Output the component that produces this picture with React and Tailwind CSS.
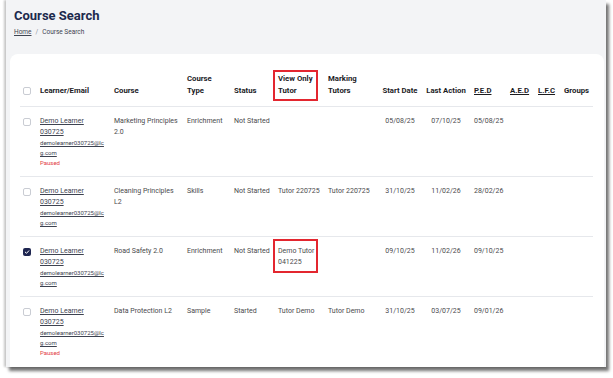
import React from "react";

const rows = [
  {
    checked: false,
    course: ["Marketing Principles", "2.0"],
    type: "Enrichment",
    status: "Not Started",
    vot: [],
    mark: [],
    start: "05/08/25",
    last: "07/10/25",
    ped: "05/08/25",
    paused: true,
  },
  {
    checked: false,
    course: ["Cleaning Principles", "L2"],
    type: "Skills",
    status: "Not Started",
    vot: ["Tutor 220725"],
    mark: ["Tutor 220725"],
    start: "31/10/25",
    last: "11/02/26",
    ped: "28/02/26",
    paused: false,
  },
  {
    checked: true,
    course: ["Road Safety 2.0"],
    type: "Enrichment",
    status: "Not Started",
    vot: ["Demo Tutor", "041225"],
    boxed: true,
    mark: [],
    start: "09/10/25",
    last: "11/02/26",
    ped: "09/10/25",
    paused: false,
  },
  {
    checked: false,
    course: ["Data Protection L2"],
    type: "Sample",
    status: "Started",
    vot: ["Tutor Demo"],
    mark: ["Tutor Demo"],
    start: "31/10/25",
    last: "03/07/25",
    ped: "09/01/26",
    paused: true,
  },
];

function Checkbox({ checked }) {
  if (checked) {
    return (
      <div className="w-[8px] h-[8px] rounded-[2px] bg-[#1e2550] flex items-center justify-center">
        <svg width="6" height="6" viewBox="0 0 12 12" fill="none">
          <path d="M2.5 6.2 L5 8.6 L9.6 3.6" stroke="white" strokeWidth="2" strokeLinecap="round" strokeLinejoin="round" />
        </svg>
      </div>
    );
  }
  return <div className="w-[8px] h-[8px] rounded-[2px] border border-[#c9ccd3] bg-white" />;
}

function Lines({ lines }) {
  return lines.map((l, i) => (
    <div key={i} className="whitespace-nowrap">
      {l}
    </div>
  ));
}

export default function App() {
  const th = "align-bottom text-left font-bold text-[7.75px] leading-[12px] pt-0 px-0 pb-[9px] text-[#1c1c1f]";
  const td = "align-top px-0 pt-[9px] pb-[8px] text-[7px] leading-[11px] text-[#4a4a4d]";
  return (
    <div className="w-[613px] h-[378px] bg-white pl-[6px] font-['Roboto',sans-serif]">
      <div className="w-[600px] h-[367px] bg-[#f3f4f6] overflow-hidden shadow-[-2px_0_2px_rgba(0,0,0,0.22),3px_4px_3px_rgba(0,0,0,0.55)]">
        <div className="pl-[8px] pt-[7px]">
          <h1 className="text-[13px] leading-[18px] font-bold text-[#1d2a4d]">Course Search</h1>
          <div className="mt-[2px] flex gap-[4px] text-[6.5px] leading-[10px] text-[#3f4552]">
            <span className="underline">Home</span>
            <span className="text-[#8a8f99]">/</span>
            <span>Course Search</span>
          </div>
        </div>
        <div className="ml-[4px] mt-[17px] w-[594px] h-[400px] bg-white rounded-t-lg pt-[19px] pl-[10px]">
          <table className="table-fixed border-collapse w-[573px]">
            <colgroup>
              <col className="w-[20px]" />
              <col className="w-[74px]" />
              <col className="w-[73px]" />
              <col className="w-[47px]" />
              <col className="w-[44px]" />
              <col className="w-[50px]" />
              <col className="w-[50px]" />
              <col className="w-[44px]" />
              <col className="w-[48px]" />
              <col className="w-[40px]" />
              <col className="w-[28px]" />
              <col className="w-[26px]" />
              <col className="w-[29px]" />
            </colgroup>
            <thead>
              <tr className="border-b border-[#e6e8ec]">
                <th className={th}>
                  <div className="h-[12px] flex items-center pl-[3px]">
                    <Checkbox />
                  </div>
                </th>
                <th className={th}>Learner/Email</th>
                <th className={th}>Course</th>
                <th className={th}>
                  Course
                  <br />
                  Type
                </th>
                <th className={th}>Status</th>
                <th className={th}>
                  <div className="relative">
                    <span className="absolute left-[-5px] top-[-3px] w-[45px] h-[31px] border-2 border-solid border-[#e3262f]" />
                    View Only
                    <br />
                    Tutor
                  </div>
                </th>
                <th className={th}>
                  Marking
                  <br />
                  Tutors
                </th>
                <th className={th + " !text-center"}>Start Date</th>
                <th className={th + " !text-center"}>Last Action</th>
                <th className={th + " !pl-[4px]"}>
                  <span className="underline">P.E.D</span>
                </th>
                <th className={th}>
                  <span className="underline">A.E.D</span>
                </th>
                <th className={th}>
                  <span className="underline">L.F.C</span>
                </th>
                <th className={th}>Groups</th>
              </tr>
            </thead>
            <tbody>
              {rows.map((r, i) => (
                <tr key={i} className={i < rows.length - 1 ? "border-b border-[#e6e8ec]" : ""}>
                  <td className={td}>
                    <div className="pl-[3px] pt-[1.5px]">
                      <Checkbox checked={r.checked} />
                    </div>
                  </td>
                  <td className={td}>
                    <div className="underline text-[#3d4250]">
                      <div>Demo Learner</div>
                      <div>030725</div>
                    </div>
                    <div className="underline text-[6px] leading-[10px] text-[#3d4250]">
                      <div>demolearner030725@lc</div>
                      <div>g.com</div>
                    </div>
                    {r.paused && <div className="text-[6px] leading-[10px] text-[#e23b44]">Paused</div>}
                  </td>
                  <td className={td}>
                    <Lines lines={r.course} />
                  </td>
                  <td className={td}>{r.type}</td>
                  <td className={td}>{r.status}</td>
                  <td className={td}>
                    <div className="relative">
                      {r.boxed && (
                        <span className="absolute left-[-5px] top-[-7px] w-[45px] h-[34px] border-2 border-solid border-[#e3262f]" />
                      )}
                      <Lines lines={r.vot} />
                    </div>
                  </td>
                  <td className={td}>
                    <Lines lines={r.mark} />
                  </td>
                  <td className={td + " text-center"}>{r.start}</td>
                  <td className={td + " text-center"}>{r.last}</td>
                  <td className={td + " !pl-[4px]"}>{r.ped}</td>
                  <td className={td}></td>
                  <td className={td}></td>
                  <td className={td}></td>
                </tr>
              ))}
            </tbody>
          </table>
        </div>
      </div>
    </div>
  );
}
